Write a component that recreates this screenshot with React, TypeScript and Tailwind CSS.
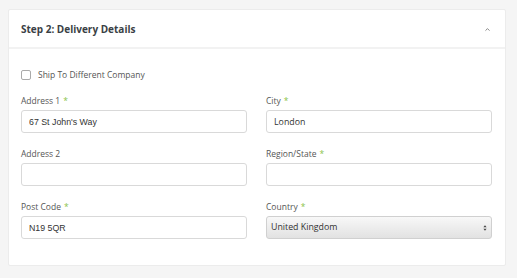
import { ChevronUp } from 'lucide-react';

const Label = ({ text, required }: { text: string; required?: boolean }) => (
  <label className="block text-[8.5px] leading-[12px] text-[#555] mb-[3px]">
    {text}
    {required && <span className="text-[#8bc34a] ml-[3px]">*</span>}
  </label>
);

const Field = ({
  label,
  value,
  required,
  arial,
}: {
  label: string;
  value?: string;
  required?: boolean;
  arial?: boolean;
}) => (
  <div>
    <Label text={label} required={required} />
    <input
      readOnly
      value={value || ''}
      className={`block w-full h-[23px] px-[7px] rounded-[3px] border border-[#d9d9d9] bg-white text-[8.8px] text-[#333] outline-none ${
        arial ? "font-['Liberation_Sans',Arial,sans-serif]" : ''
      }`}
    />
  </div>
);

export default function App() {
  return (
    <div className="w-[517px] h-[278px] bg-[#f5f5f5] pt-[9px] pl-[8px] font-['Open_Sans',sans-serif]">
      <div className="w-[498px] h-[257px] bg-white border border-[#ececec] rounded-[2px]">
        {/* header */}
        <div className="h-[39px] pt-[2px] flex items-center justify-between pl-[12px] pr-[14px] border-b-[2px] border-[#f2f2f2]">
          <h2 className="text-[10px] font-bold text-[#3a3f45]">Step 2: Delivery Details</h2>
          <ChevronUp className="w-[7px] h-[7px] text-[#777]" strokeWidth={3} />
        </div>

        <div className="pl-[12px] pr-[13px] pt-[21px]">
          <label className="flex items-center gap-[7px] text-[8.5px] leading-[10px] text-[#555]">
            <span className="w-[10px] h-[10px] border border-[#aaa] rounded-[2px] bg-white" />
            Ship To Different Company
          </label>

          <div className="grid grid-cols-2 gap-x-[19px] gap-y-[15px] mt-[15px]">
            <Field label="Address 1" value="67 St John's Way" required arial />
            <Field label="City" value="London" required />
            <Field label="Address 2" />
            <Field label="Region/State" required />
            <Field label="Post Code" value="N19 5QR" required arial />
            <div>
              <Label text="Country" required />
              <div className="relative h-[23px] rounded-[3px] border border-[#d0d0d0] bg-gradient-to-b from-[#f8f8f8] to-[#e2e2e2] flex items-center px-[4px] text-[8.8px] text-[#333]">
                United Kingdom
                <svg
                  className="absolute right-[4px] top-1/2 -translate-y-1/2"
                  width="4"
                  height="7"
                  viewBox="0 0 5 8"
                >
                  <path d="M2.5 0.5 L4.5 3 H0.5 Z" fill="#444" />
                  <path d="M2.5 7.5 L4.5 5 H0.5 Z" fill="#444" />
                </svg>
              </div>
            </div>
          </div>
        </div>
      </div>
    </div>
  );
}
